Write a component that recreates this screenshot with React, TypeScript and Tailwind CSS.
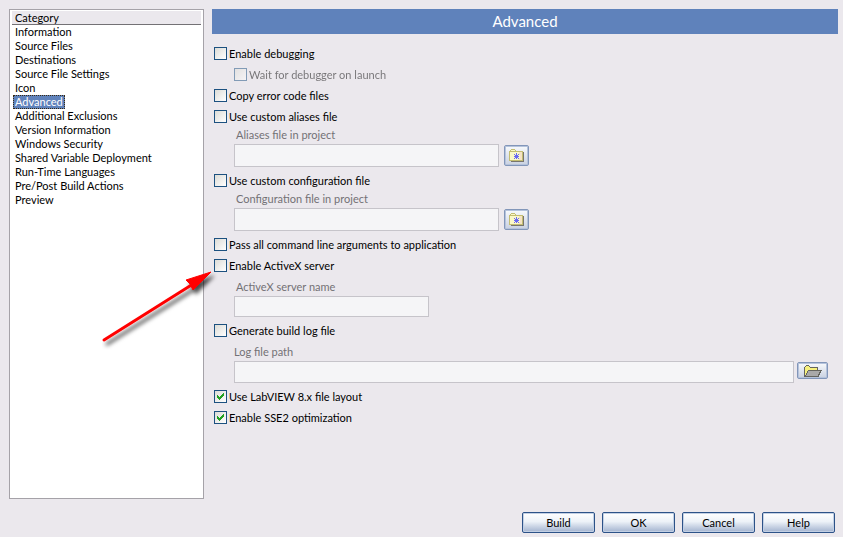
import { ReactNode, useState } from 'react';

const categories = [
  'Information',
  'Source Files',
  'Destinations',
  'Source File Settings',
  'Icon',
  'Advanced',
  'Additional Exclusions',
  'Version Information',
  'Windows Security',
  'Shared Variable Deployment',
  'Run-Time Languages',
  'Pre/Post Build Actions',
  'Preview',
];

interface CheckRowProps {
  id: string;
  label: string;
  checked?: boolean;
  disabled?: boolean;
  children?: ReactNode;
}

const CheckRow: React.FC<CheckRowProps> = ({ id, label, checked = false, disabled = false, children }) => {
  return (
    <div className={disabled ? 'relative flex h-[21px] items-center gap-0.5 pl-5 opacity-50' : 'relative flex h-[21px] items-center gap-0.5'}>
      <span className="relative size-[13px] shrink-0">
        <input
          id={id}
          type="checkbox"
          defaultChecked={checked}
          disabled={disabled}
          className="peer block size-[13px] appearance-none border border-[#1c5180] bg-linear-to-br from-[#dcdcd7] to-white"
        />
        <svg className="pointer-events-none absolute inset-0 hidden size-[13px] peer-checked:block" viewBox="0 0 13 13" shapeRendering="crispEdges">
          <path d="M3 5h1v1h1v1h1v-1h1v-1h1v-1h1v-1h1v3h-1v1h-1v1h-1v1h-1v1h-1v-1h-1v-1h-1z" fill="#21a121" />
        </svg>
      </span>
      <label htmlFor={id} className="whitespace-nowrap">{label}</label>
      {children}
    </div>
  );
};

const BrowseButton: React.FC<{ label: string; className: string; children: ReactNode }> = ({ label, className, children }) => {
  return (
    <button
      type="button"
      aria-label={label}
      className={`flex shrink-0 items-center justify-center rounded-xs border border-[#8296b9] bg-linear-to-b from-[#f8fafc] to-[#c9d1e1] shadow-[inset_0_0_0_1px_#b5c3dc] ${className}`}
    >
      {children}
    </button>
  );
};

const ProjectFolderIcon = () => (
  <svg width="15" height="13" viewBox="0 0 15 13" shapeRendering="crispEdges">
    <path d="M14 3h1v10H2v-1h12z" fill="#77756f" />
    <path d="M0 2h1V1h1V0h4v1h1v1h7v10H0z" fill="#c3bd72" />
    <path d="M2 1h4v1H2zM1 3h12v8H1z" fill="#fbf8c8" />
    <path d="M10 3h3v8h-3v-2h1V6h-1z" fill="#f5e3c4" />
    <path d="M7 4h1v2h1V5h1v1H9v1h1v1H9v1h1v1H9V9H8v1H7V9H6v1H5V9h1V8H5V7h1V6H5V5h1v1h1z" fill="#6868f4" />
  </svg>
);

const OpenFolderIcon = () => (
  <svg width="18" height="12" viewBox="0 0 18 12" shapeRendering="crispEdges">
    <path d="M0 2h1V1h1V0h3v1h1v1h8v3h4v1h-1v2h-1v2h-1v2H0z" fill="#65655f" />
    <path d="M1 2h1V1h3v1h1v1h7v2H4v1H3v2H2v2H1z" fill="#f6f07c" />
    <path d="M4 6h12v1h-1v2h-1v2H2v-1h1V8h1z" fill="#a9a9a9" />
  </svg>
);

const fieldClass = 'min-w-0 border border-[#c6c4ca] bg-[#f5f5f7] px-1';

const PointerArrow = () => (
  <svg className="pointer-events-none absolute top-3 -left-28 h-[84px] w-[116px]" viewBox="0 0 116 84" aria-hidden="true">
    <defs>
      <filter id="arrow-shadow" x="-10%" y="-10%" width="130%" height="130%">
        <feDropShadow dx="3" dy="4" stdDeviation="2" floodColor="#000" floodOpacity="0.7" />
      </filter>
    </defs>
    <g filter="url(#arrow-shadow)">
      <path d="M2 73 91 17" stroke="#f00" strokeWidth="3" strokeLinecap="round" />
      <path d="M109 5 84 13 88 17 91 23Z" fill="#f00" stroke="#f00" strokeWidth="1" />
    </g>
  </svg>
);

const App: React.FC = () => {
  const [selected, setSelected] = useState('Advanced');

  return (
    <div className="flex min-h-screen flex-col bg-[#ebe8ed] pt-[9px] pr-[5px] pb-1 pl-[9px] font-['Lato',sans-serif] text-[11px] leading-[14px] text-black">
      <main className="flex flex-1 gap-2">
        <nav aria-label="Category" className="w-[195px] shrink-0 border border-[#a5a2a8] bg-white px-0.5 pt-px">
          <h2 className="h-[14px] border-b border-[#737175] bg-[#ebe8ed] pl-[3px] leading-[14px]">Category</h2>
          <ul>
            {categories.map((name) => (
              <li key={name} className="flex h-[14px] pl-px">
                <button
                  type="button"
                  onClick={() => setSelected(name)}
                  className={
                    name === selected
                      ? 'border border-dotted border-[#3a2a10] bg-[#5f82bb] px-px leading-[12px] text-white'
                      : 'px-0.5'
                  }
                >
                  {name}
                </button>
              </li>
            ))}
          </ul>
        </nav>

        <section className="min-w-0 flex-1">
          <h1 className="h-[25px] bg-[#5f82bb] text-center text-[15px] leading-[24px] text-white">Advanced</h1>

          <form className="pt-[9px] pr-[10px] pl-0.5">
            <CheckRow id="debugging" label="Enable debugging" />
            <CheckRow id="wait" label="Wait for debugger on launch" disabled />
            <CheckRow id="error-codes" label="Copy error code files" />
            <CheckRow id="aliases" label="Use custom aliases file" />
            <div className="h-[43px] pl-5">
              <label htmlFor="aliases-file" className="block h-[17px] pl-0.5 leading-[16px] text-[#737175]">Aliases file in project</label>
              <div className="flex items-center gap-[5px]">
                <input id="aliases-file" type="text" disabled className={`h-[23px] w-[265px] ${fieldClass}`} />
                <BrowseButton label="Browse project for aliases file" className="h-[21px] w-[25px]">
                  <ProjectFolderIcon />
                </BrowseButton>
              </div>
            </div>

            <CheckRow id="config" label="Use custom configuration file" />
            <div className="h-[43px] pl-5">
              <label htmlFor="config-file" className="block h-[17px] pl-0.5 leading-[16px] text-[#737175]">Configuration file in project</label>
              <div className="flex items-center gap-[5px]">
                <input id="config-file" type="text" disabled className={`h-[23px] w-[265px] ${fieldClass}`} />
                <BrowseButton label="Browse project for configuration file" className="h-[21px] w-[25px]">
                  <ProjectFolderIcon />
                </BrowseButton>
              </div>
            </div>

            <CheckRow id="arguments" label="Pass all command line arguments to application" />
            <CheckRow id="activex" label="Enable ActiveX server">
              <PointerArrow />
            </CheckRow>
            <div className="h-11 pl-5">
              <label htmlFor="activex-name" className="block h-5 pl-0.5 leading-[22px] text-[#737175]">ActiveX server name</label>
              <input id="activex-name" type="text" disabled className={`block h-[21px] w-[195px] ${fieldClass}`} />
            </div>

            <CheckRow id="log" label="Generate build log file" />
            <div className="h-[45px] pl-5">
              <label htmlFor="log-path" className="block h-5 leading-[22px] text-[#737175]">Log file path</label>
              <div className="flex items-start gap-[3px]">
                <input id="log-path" type="text" disabled className={`h-[22px] flex-1 ${fieldClass}`} />
                <BrowseButton label="Browse for log file" className="mt-px h-[17px] w-[31px]">
                  <OpenFolderIcon />
                </BrowseButton>
              </div>
            </div>

            <CheckRow id="layout" label="Use LabVIEW 8.x file layout" checked />
            <CheckRow id="sse2" label="Enable SSE2 optimization" checked />
          </form>
        </section>
      </main>

      <footer className="flex justify-end gap-[7px] pt-[13px] pr-[3px]">
        {['Build', 'OK', 'Cancel', 'Help'].map((name) => (
          <button
            key={name}
            type="button"
            className="h-[21px] w-[73px] rounded-xs border border-[#2c5288] bg-linear-to-b from-white via-[#edf2f8] via-45% to-[#a3b3cf] leading-[19px] shadow-[inset_0_0_0_1px_#c3d0e4]"
          >
            {name}
          </button>
        ))}
      </footer>
    </div>
  );
};

export default App;
